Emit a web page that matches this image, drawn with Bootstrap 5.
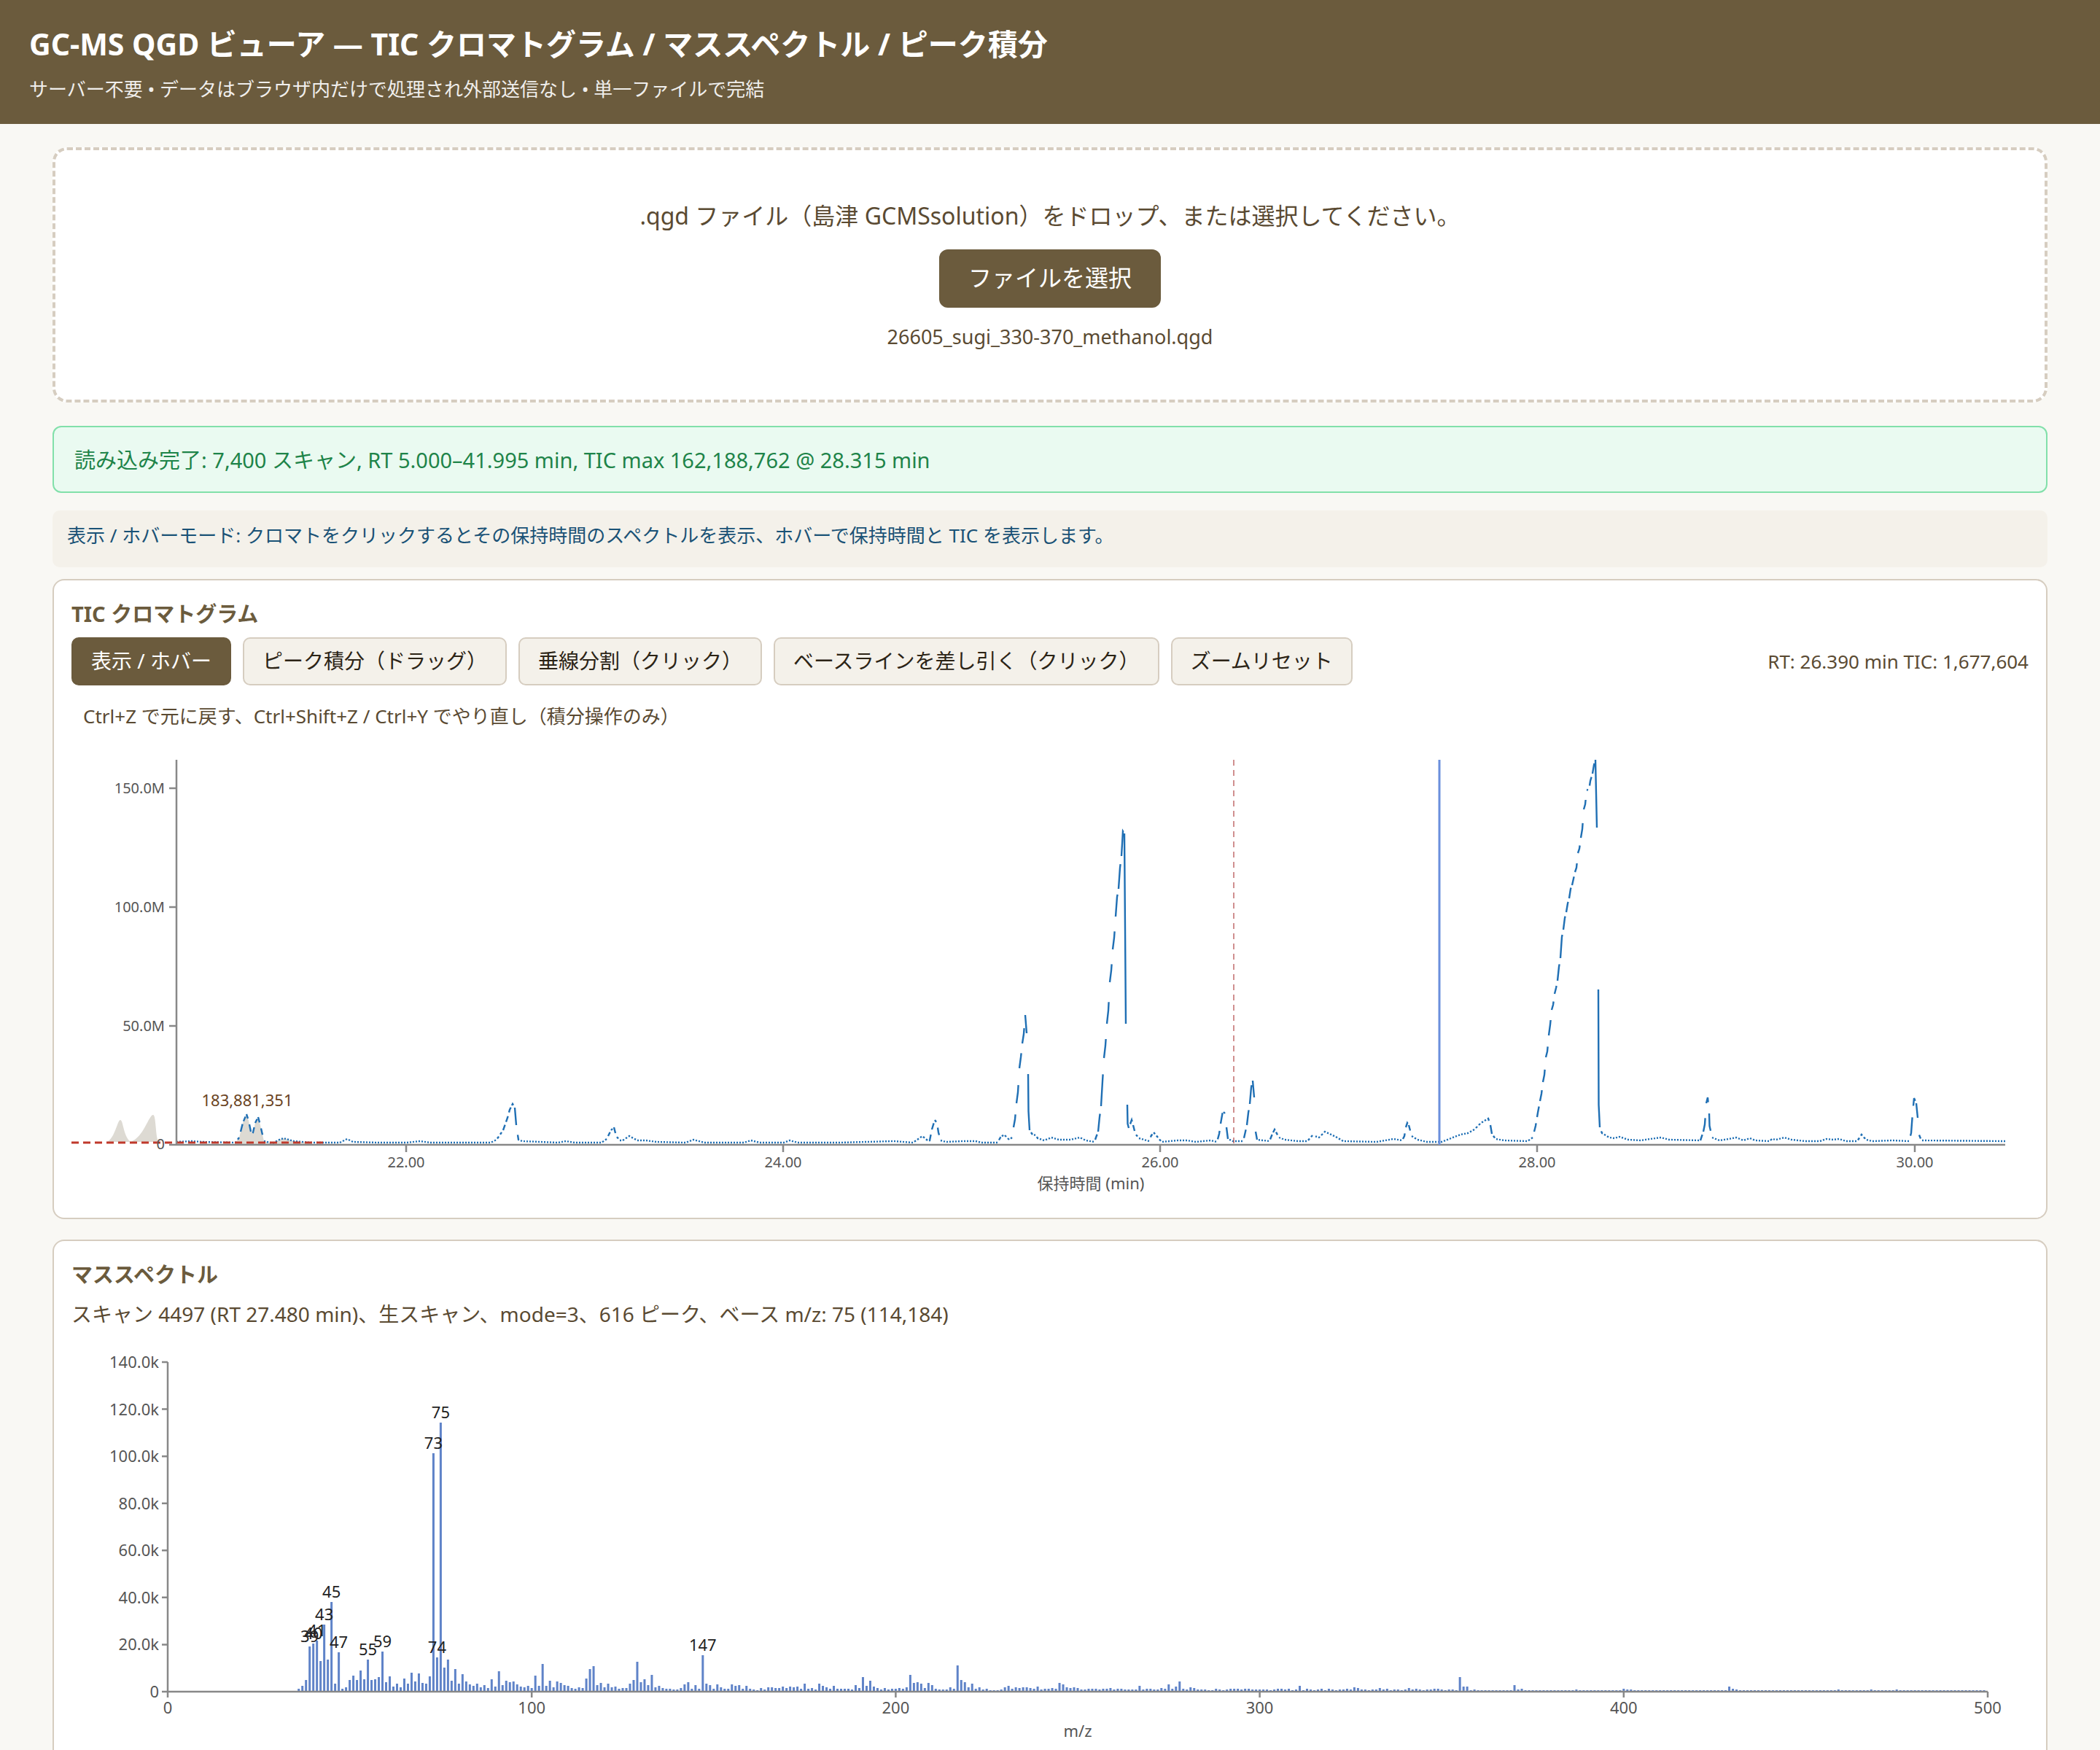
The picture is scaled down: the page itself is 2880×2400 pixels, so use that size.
<!DOCTYPE html>
<html lang="ja">
<head>
<meta charset="utf-8">
<meta name="viewport" content="width=device-width, initial-scale=1">
<title>GC-MS QGD ビューア</title>
<link href="https://cdn.jsdelivr.net/npm/bootstrap@5.3.0/dist/css/bootstrap.min.css" rel="stylesheet">
<style>
:root{--brown:#6b5b3d;--ink:#5a4a32;--line:#d6cdc0;--soft:#f4f1ea}
body{font-family:"Noto Sans","Noto Sans CJK JP",sans-serif;background:#f9f8f4;color:var(--ink);font-size:28px;line-height:44px}
.app-head{background:var(--brown);color:#fff;padding:32px 40px 26px}
.app-head h1{font-size:41px;line-height:56px;font-weight:700;margin:0 0 12px}
.app-head p{font-size:26px;opacity:.9}
.app-main{padding:32px 72px}
.drop-zone{border:4px dashed var(--line);border-radius:20px;background:#fff;padding:64px 24px}
.drop-zone p{font-size:32px;line-height:52px;margin-bottom:20px}
.btn-pick{font-size:32px;line-height:48px;padding:15px 40px 17px;border:0;border-radius:12px;background:var(--brown);color:#fff;margin-bottom:18px}
.file-name{font-size:27px}
.status-ok{margin-top:32px;padding:23px 28px 21px;border:2px solid #82e0aa;border-radius:12px;background:#eafaf1;color:#1e8449;font-size:29px}
.mode-note{margin-top:24px;padding:12px 20px 22px;border-radius:10px;background:var(--soft);color:#1a5276;font-size:26px}
.panel{border:2px solid var(--line);border-radius:16px;background:#fff;padding:24px}
.panel h2{font-size:29px;line-height:44px;font-weight:700;color:var(--brown);margin:0 0 10px}
.spec-panel{margin-top:28px}
.tools{gap:16px}
.btn-tool{font-size:28px;line-height:42px;padding:9px 25px 11px;border:2px solid var(--line);border-radius:10px;background:var(--soft);color:#2c2416}
.btn-tool.active{background:var(--brown);border-color:var(--brown);color:#fff}
.readout{font-size:26px}
.hint{font-size:26px;padding:20px 16px 14px}
.spec-info{font-size:28px;margin-bottom:16px}
svg text{font-size:22px;fill:#555}
svg .tic-text text{font-size:20px}
svg .peak-labels text{fill:#222}
svg .area-label{fill:#6b4423}
.axes{stroke:#888;stroke-width:2.5;fill:none}
.end{text-anchor:end}.mid{text-anchor:middle}
</style>
<script src="https://cdn.jsdelivr.net/npm/bootstrap@5.3.0/dist/js/bootstrap.bundle.min.js"></script>
</head>
<body>
<header class="app-head">
  <h1>GC-MS QGD ビューア — TIC クロマトグラム / マススペクトル / ピーク積分</h1>
  <p class="mb-0">サーバー不要 • データはブラウザ内だけで処理され外部送信なし • 単一ファイルで完結</p>
</header>
<main class="app-main">
  <section class="drop-zone d-flex flex-column align-items-center text-center">
    <p>.qgd ファイル（島津 GCMSsolution）をドロップ、または選択してください。</p>
    <button type="button" class="btn btn-pick">ファイルを選択</button>
    <div class="file-name">26605_sugi_330-370_methanol.qgd</div>
  </section>
  <div class="status-ok" role="status">読み込み完了: 7,400 スキャン, RT 5.000–41.995 min, TIC max 162,188,762 @ 28.315 min</div>
  <div class="mode-note">表示 / ホバーモード: クロマトをクリックするとその保持時間のスペクトルを表示、ホバーで保持時間と TIC を表示します。</div>

  <section class="panel mt-3">
    <h2>TIC クロマトグラム</h2>
    <div class="d-flex flex-wrap align-items-center tools">
      <button type="button" class="btn btn-tool active">表示 / ホバー</button>
      <button type="button" class="btn btn-tool">ピーク積分（ドラッグ）</button>
      <button type="button" class="btn btn-tool">垂線分割（クリック）</button>
      <button type="button" class="btn btn-tool">ベースラインを差し引く（クリック）</button>
      <button type="button" class="btn btn-tool">ズームリセット</button>
      <span class="readout ms-auto">RT: 26.390 min TIC: 1,677,604</span>
    </div>
    <div class="hint">Ctrl+Z で元に戻す、Ctrl+Shift+Z / Ctrl+Y でやり直し（積分操作のみ）</div>
    <svg class="d-block w-100" viewBox="98 1018 2684 628" role="img" aria-label="TIC クロマトグラム">
      <path d="M147 1566 C158 1560 161 1536 165 1536 C169 1536 169 1558 179 1566 C197 1560 204 1529 210 1529 C214 1529 213 1556 217 1566Z" fill="#dddad3"/>
      <path d="M323 1567 L328 1560 333 1540 338 1528 341 1537 344 1552 347 1553 350 1540 354 1532 357 1543 362 1565 374 1568 383 1563 389 1561 403 1565 426 1567 426 1569 323 1569Z" fill="#dddad3"/>
      <path id="tic" fill="none" stroke="#1f6fb4" stroke-width="2.4"/>
      <path d="M98 1567H443" stroke="#c0392b" stroke-width="3" stroke-dasharray="10 6"/>
      <path class="axes" d="M242 1042V1570M232 1570H2750M232 1407H242M232 1244H242M232 1081H242M557 1570V1580M1074 1570V1580M1591 1570V1580M2108 1570V1580M2626 1570V1580"/>
      <path d="M1692 1042V1570" stroke="#b04545" stroke-opacity=".6" stroke-width="2" stroke-dasharray="8 6"/>
      <path d="M1974 1042V1570" stroke="#6a8fdc" stroke-width="3"/>
      <g class="tic-text">
        <g class="end"><text x="226" y="1088">150.0M</text><text x="226" y="1251">100.0M</text><text x="226" y="1414">50.0M</text><text x="226" y="1576">0</text></g>
        <g class="mid"><text x="557" y="1601">22.00</text><text x="1074" y="1601">24.00</text><text x="1591" y="1601">26.00</text><text x="2108" y="1601">28.00</text><text x="2626" y="1601">30.00</text></g>
      </g>
      <text class="mid" x="1496" y="1631">保持時間 (min)</text>
      <text class="mid area-label" x="339" y="1517">183,881,351</text>
    </svg>
  </section>

  <section class="panel spec-panel">
    <h2>マススペクトル</h2>
    <div class="spec-info">スキャン 4497 (RT 27.480 min)、生スキャン、mode=3、616 ピーク、ベース m/z: 75 (114,184)</div>
    <svg class="d-block w-100" viewBox="98 1840 2684 560" role="img" aria-label="マススペクトル">
      <path id="bars" fill="none" stroke="#5f83c8" stroke-width="3"/>
      <path id="spec-axes" class="axes"/>
      <g id="spec-y" class="end"></g>
      <g id="spec-x" class="mid"></g>
      <g id="spec-labels" class="mid peak-labels"></g>
      <text class="mid" x="1478" y="2382">m/z</text>
    </svg>
  </section>
</main>
<script>
// Chromatogram trace as x,y pairs in chart units
const trace = `242,1566 263,1565 277,1566 323,1567 328,1560 333,1540 338,1528 341,1537 344,1552 347,1553 350,1540 354,1532 357,1543 362,1565 374,1568 383,1563 389,1561 403,1565 426,1567 466,1567 476,1562 484,1566 518,1567 558,1567 576,1565 590,1567 673,1567 681,1563 690,1550 696,1533 699,1522 703,1514 706,1519 708,1543 711,1563 716,1565 765,1567 776,1565 788,1567 825,1567 832,1562 838,1550 842,1546 845,1558 850,1564 854,1564 863,1558 874,1564 886,1564 900,1566 940,1567 951,1563 966,1567 1020,1567 1030,1564 1042,1567 1075,1567 1083,1564 1094,1567 1150,1567 1226,1565 1252,1567 1258,1563 1265,1558 1272,1564 1275,1564 1278,1549 1281,1539 1282,1536 1285,1540 1287,1553 1290,1564 1297,1566 1321,1565 1338,1565 1346,1567 1368,1567 1372,1560 1377,1556 1384,1563 1388,1560 1390,1546 1392,1535 1394,1513 1396,1498 1398,1465 1400,1450 1402,1431 1404,1418 1406,1392 1408,1417 1410,1473 1410.5,1524 1412,1550 1416,1556 1421,1557 1423,1561 1432,1564 1442,1560 1452,1563 1468,1563 1481,1560 1489,1564 1501,1566 1503,1560 1506,1552 1508,1532 1510,1517 1512,1483 1514,1451 1516,1434 1518,1404 1520,1386 1522,1347 1524,1331 1526,1302 1528,1286 1530,1257 1532,1230 1534,1219 1536,1190 1538,1174 1540,1140 1542,1143 1544,1404 1546,1515 1546.5,1541 1548,1547 1552,1536 1554,1543 1557,1555 1562,1561 1576,1565 1579,1557 1583,1554 1588,1560 1593,1566 1615,1564 1628,1564 1640,1566 1660,1564 1669,1566 1672,1555 1674,1541 1677,1524 1680,1527 1682,1546 1684,1562 1691,1565 1705,1565 1708,1552 1710,1543 1712,1526 1714,1514 1716,1491 1718,1482 1720,1505 1720.5,1535 1722,1552 1724,1563 1741,1565 1745,1555 1748,1549 1754,1560 1762,1563 1780,1565 1793,1565 1800,1557 1809,1560 1817,1552 1832,1559 1842,1565 1888,1566 1911,1562 1923,1564 1926,1558 1928,1546 1930,1540 1932,1543 1936,1558 1944,1563 1957,1566 1977,1566 1990,1561 2003,1556 2013,1554 2022,1549 2031,1540 2041,1534 2044,1543 2046,1555 2051,1562 2063,1564 2095,1565 2102,1560 2106,1544 2109,1526 2112,1510 2114,1500 2116,1484 2118,1474 2120,1450 2122,1442 2124,1420 2126,1405 2128,1385 2130,1378 2132,1363 2134,1355 2136,1345 2138,1326 2140,1314 2142,1285 2144,1275 2146,1259 2148,1251 2150,1239 2152,1232 2154,1219 2156,1214 2158,1205 2160,1196 2162,1190 2164,1170 2166,1164 2168,1149 2170,1137 2172,1110 2174,1103 2176,1083 2179,1084 2181,1071 2184,1061 2186,1049 2188,1042 2190,1135 2192,1357 2192.5,1515 2194,1546 2197,1554 2207,1560 2214,1561 2221,1559 2233,1563 2250,1564 2263,1562 2278,1560 2289,1563 2332,1564 2336,1552 2338,1542 2340,1513 2342,1505 2344,1527 2344.5,1544 2348,1560 2358,1564 2371,1562 2381,1560 2391,1564 2400,1561 2407,1564 2427,1565 2430,1562 2436,1563 2447,1560 2457,1563 2476,1565 2496,1565 2505,1562 2514,1563 2522,1562 2532,1565 2547,1565 2553,1556 2559,1563 2568,1565 2595,1564 2618,1565 2621,1554 2623,1527 2625,1506 2628,1513 2630,1533 2631,1554 2635,1564 2750,1565`
  .split(' ').map(p => p.split(',').map(Number));
const yAt = x => {
  for (let i = 1; i < trace.length; i++) {
    const [x0, y0] = trace[i - 1], [x1, y1] = trace[i];
    if (x <= x1) return y0 + (y1 - y0) * (x - x0) / (x1 - x0);
  }
  return 1565;
};
// Every other pair of columns is joined, which gives the trace its broken look;
// steep rising flanks get slightly longer strokes
function broken(from, to) {
  let d = '';
  for (let x = from; x < to; x += 4) {
    const end = yAt(x) - yAt(x + 2) > 3 ? x + 2.6 : x + 2;
    d += `M${x} ${yAt(x)}`;
    trace.filter(p => p[0] > x && p[0] < end).forEach(p => d += `L${p[0]} ${p[1]}`);
    d += `L${end} ${yAt(end)}`;
  }
  return d;
}
document.getElementById('tic').setAttribute('d', broken(242, 1800) + broken(1804, 2750));

// Bar heights from m/z 35 upwards
const heights = `1 4 8 16 62 66 70 42 92 44 123 11 54 4 6 16 22 16 29 17 44 16 17 20 55 13 21 7 11 6 18 11 26 14 25 12 11 21 327 47 369 33 44 15 31 11 24 14 10 8 11 6 9 5 17 7 28 9 15 13 14 10 7 6 8 5
22 8 38 8 15 6 14 12 9 8 5 4 6 5 18 31 35 9 12 6 11 6 7 4 5 5 11 16 41 13 17 9 23 6 8 5 4 4 3 3 5 10 13 4 9 4 50 11 9 4 10 6 4 4 10 8 9 4 8 4 3 2 5 3 6 6 5 5 7 5 7 6 7 4 11 4 5 3 11 8 6 4 8 4 4 4 4 3 9 5 20 8 15 7 5 3 5 3 4 4
5 4 6 23 12 13 11 5 12 9 4 3 3 3 6 4 36 16 13 6 11 4 6 3 4 2 2 2 3 6 8 4 6 5 6 6 5 4 7 3 4 4 5 4 12 10 6 5 6 5 3 3 4 4 4 3 4 4 5 3 4 4 3 3 3 3 8 3 4 4 3 3 5 4 10 4 7 14 4 3 6 5 3 3 3 2 2 4 3 2 3 4 4 4 3 4 4 3 3 3`.split(/\s+/).map(Number);
const minor = {305:4,306:4,308:4,311:8,313:4,317:4,319:4,324:4,326:6,327:5,333:5,335:4,341:5,342:3,343:4,348:4,349:4,355:20,356:7,357:7,359:3,370:9,371:3,372:4,387:3,400:4,401:3,402:3,429:7,430:4,431:3,459:3,468:3,475:3};
const X = m => 230 + m * 4.992, Y = v => 2320 - v * 3.2286;
let d = '';
for (let m = 35; m < 500; m++) {
  const i = m - 35;
  const h = i < heights.length ? heights[i] : minor[m] || (m < 355 ? (m % 3 ? 3 : 2) : 2);
  d += `M${X(m)} 2320v${-h}`;
}
document.getElementById('bars').setAttribute('d', d);
const label = (id, x, y, t) => {
  const e = document.createElementNS('http://www.w3.org/2000/svg', 'text');
  e.setAttribute('x', x); e.setAttribute('y', y); e.textContent = t;
  document.getElementById(id).appendChild(e);
};
let ax = 'M230 1868V2320M222 2320H2726';
for (let k = 0; k <= 140; k += 20) { ax += `M222 ${Y(k)}h8`; label('spec-y', 218, Y(k) + 8, k ? k + '.0k' : '0'); }
for (let m = 0; m <= 500; m += 100) { ax += `M${X(m)} 2320v8`; label('spec-x', X(m), 2350, m); }
document.getElementById('spec-axes').setAttribute('d', ax);
[39, 40, 41, 43, 45, 47, 55, 59, 73, 74, 75, 147].forEach(m => label('spec-labels', X(m), 2314 - heights[m - 35], m));
</script>
</body>
</html>
